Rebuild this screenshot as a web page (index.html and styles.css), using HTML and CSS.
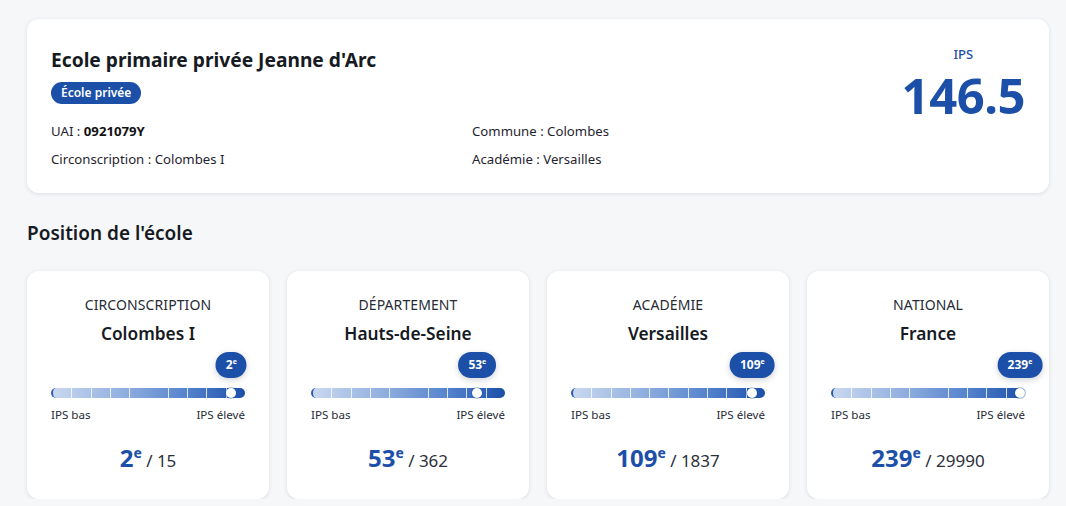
FILE: index.html
```html
<!DOCTYPE html>
<html lang="fr">
<head>
<meta charset="utf-8">
<title>Ecole primaire privée Jeanne d'Arc</title>
<link rel="stylesheet" href="styles.css">
</head>
<body>
<main class="page">
  <section class="school-card">
    <div class="school-main">
      <h1 class="school-name">Ecole primaire privée Jeanne d'Arc</h1>
      <span class="tag">École privée</span>
      <div class="info-grid">
        <div class="info">UAI : <strong>0921079Y</strong></div>
        <div class="info">Commune : Colombes</div>
        <div class="info">Circonscription : Colombes I</div>
        <div class="info">Académie : Versailles</div>
      </div>
    </div>
    <div class="ips">
      <div class="ips-label">IPS</div>
      <div class="ips-value">146.5</div>
    </div>
  </section>

  <h2 class="section-title">Position de l'école</h2>

  <section class="rank-grid">
    <article class="rank-card">
      <div class="rank-level">CIRCONSCRIPTION</div>
      <div class="rank-name">Colombes I</div>
      <div class="gauge">
        <div class="track">
          <div class="marker" style="left: 92.9%"><span class="bubble">2<sup>e</sup></span></div>
        </div>
        <div class="gauge-labels"><span>IPS bas</span><span>IPS élevé</span></div>
      </div>
      <div class="rank-value"><span class="pos">2<sup>e</sup></span> / 15</div>
    </article>
    <article class="rank-card">
      <div class="rank-level">DÉPARTEMENT</div>
      <div class="rank-name">Hauts-de-Seine</div>
      <div class="gauge">
        <div class="track">
          <div class="marker" style="left: 85.6%"><span class="bubble">53<sup>e</sup></span></div>
        </div>
        <div class="gauge-labels"><span>IPS bas</span><span>IPS élevé</span></div>
      </div>
      <div class="rank-value"><span class="pos">53<sup>e</sup></span> / 362</div>
    </article>
    <article class="rank-card">
      <div class="rank-level">ACADÉMIE</div>
      <div class="rank-name">Versailles</div>
      <div class="gauge">
        <div class="track">
          <div class="marker" style="left: 93.4%"><span class="bubble">109<sup>e</sup></span></div>
        </div>
        <div class="gauge-labels"><span>IPS bas</span><span>IPS élevé</span></div>
      </div>
      <div class="rank-value"><span class="pos">109<sup>e</sup></span> / 1837</div>
    </article>
    <article class="rank-card">
      <div class="rank-level">NATIONAL</div>
      <div class="rank-name">France</div>
      <div class="gauge">
        <div class="track">
          <div class="marker" style="left: 97.4%"><span class="bubble">239<sup>e</sup></span></div>
        </div>
        <div class="gauge-labels"><span>IPS bas</span><span>IPS élevé</span></div>
      </div>
      <div class="rank-value"><span class="pos">239<sup>e</sup></span> / 29990</div>
    </article>
  </section>
</main>
</body>
</html>
```

FILE: styles.css
```css
* { box-sizing: border-box; }
html, body {
  margin: 0;
  padding: 0;
  background: #f6f7f9;
  color: #1f2430;
  font-family: "Noto Sans", "Open Sans", sans-serif;
}
.page {
  width: 1066px;
  padding: 19px 17px 0 27px;
}
.school-card {
  background: #fff;
  border-radius: 12px;
  box-shadow: 0 1px 4px rgba(20, 30, 50, 0.12);
  padding: 27px 24px 24px;
  display: flex;
  justify-content: space-between;
  align-items: flex-start;
}
.school-main { flex: 1; }
.school-name {
  margin: 0;
  font-size: 19.2px;
  line-height: 28px;
  font-weight: 700;
  color: #161a23;
}
.tag {
  display: inline-block;
  margin-top: 8px;
  height: 22px;
  line-height: 22px;
  padding: 0 10px;
  border-radius: 11px;
  background: #1b4fa8;
  color: #fff;
  font-size: 12px;
  font-weight: 600;
}
.info-grid {
  margin-top: 17px;
  display: grid;
  grid-template-columns: 421px 1fr;
  row-gap: 8px;
}
.info {
  font-size: 13.2px;
  line-height: 20px;
  color: #1f2430;
}
.info strong { font-weight: 700; color: #111; }
.ips {
  text-align: center;
}
.ips-label {
  margin-top: 1px;
  font-size: 13px;
  line-height: 14px;
  color: #1b4fa8;
  font-weight: 500;
}
.ips-value {
  margin-top: 11px;
  font-size: 49px;
  line-height: 46px;
  font-weight: 700;
  color: #1b4fa8;
  letter-spacing: -0.5px;
}
.section-title {
  margin: 26px 0 24px;
  font-size: 19px;
  line-height: 28px;
  font-weight: 600;
  color: #161a23;
}
.rank-grid {
  display: grid;
  grid-template-columns: repeat(4, 1fr);
  gap: 18px;
}
.rank-card {
  background: #fff;
  border-radius: 12px;
  box-shadow: 0 1px 4px rgba(20, 30, 50, 0.12);
  padding: 24px 24px 22px;
  text-align: center;
}
.rank-level {
  font-size: 14px;
  line-height: 20px;
  color: #262b36;
  letter-spacing: 0.1px;
}
.rank-name {
  margin-top: 6px;
  font-size: 17.3px;
  line-height: 26px;
  font-weight: 600;
  color: #161a23;
}
.gauge { padding-top: 41px; }
.track {
  position: relative;
  height: 10px;
  border-radius: 5px;
  border-left: 2px solid #2a5bb0;
  background:
    repeating-linear-gradient(90deg, transparent 0, transparent 18.3px, rgba(255,255,255,0.8) 18.3px, rgba(255,255,255,0.8) 19.3px),
    linear-gradient(90deg, #c9d8ef 0%, #93b1e0 35%, #5583cd 70%, #1b4fa8 100%);
}
.marker {
  position: absolute;
  top: 0;
  width: 10px;
  height: 10px;
  margin-left: -5px;
  border-radius: 50%;
  background: #fff;
  box-shadow: 0 0 0 1px rgba(27, 79, 168, 0.35);
}
.bubble {
  position: absolute;
  bottom: 20px;
  left: 50%;
  transform: translateX(-50%);
  height: 26px;
  line-height: 26px;
  padding: 0 10px;
  border-radius: 13px;
  background: #1b4fa8;
  color: #fff;
  font-size: 12px;
  font-weight: 700;
  white-space: nowrap;
  box-shadow: 0 2px 6px rgba(20, 30, 60, 0.2);
}
.bubble sup {
  font-size: 7px;
  line-height: 0;
  vertical-align: 5px;
}
.gauge-labels {
  margin-top: 8px;
  display: flex;
  justify-content: space-between;
  font-size: 11.6px;
  line-height: 18px;
  color: #262b36;
}
.rank-value {
  margin-top: 18px;
  font-size: 17px;
  line-height: 32px;
  color: #2b303b;
}
.pos {
  font-size: 24px;
  font-weight: 700;
  color: #1b4fa8;
}
.pos sup {
  font-size: 14px;
  line-height: 0;
  vertical-align: 9px;
}
```
